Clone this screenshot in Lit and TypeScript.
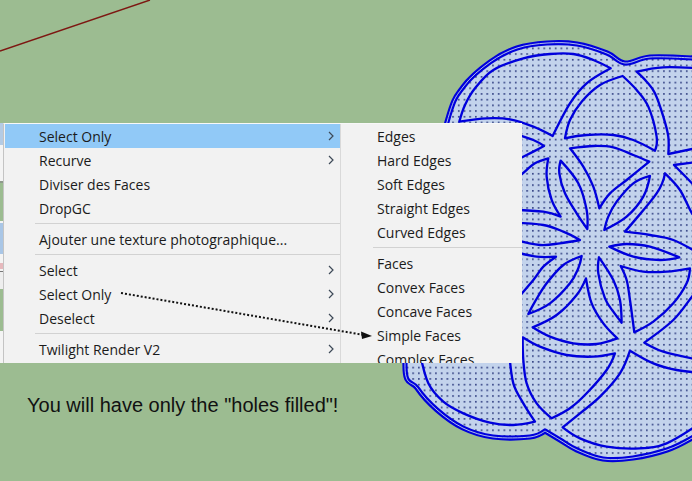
import { css, html, LitElement, svg } from "lit";
import { customElement } from "lit/decorators.js";

type Row = { label?: string; sub?: boolean; active?: boolean; sep?: boolean };
type Pt = [number, number];

const MAIN: Row[] = [
	{ label: "Select Only", sub: true, active: true },
	{ label: "Recurve", sub: true },
	{ label: "Diviser des Faces" },
	{ label: "DropGC" },
	{ sep: true },
	{ label: "Ajouter une texture photographique..." },
	{ sep: true },
	{ label: "Select", sub: true },
	{ label: "Select Only", sub: true },
	{ label: "Deselect", sub: true },
	{ sep: true },
	{ label: "Twilight Render V2", sub: true },
];

const SUB: Row[] = [
	{ label: "Edges" },
	{ label: "Hard Edges" },
	{ label: "Soft Edges" },
	{ label: "Straight Edges" },
	{ label: "Curved Edges" },
	{ sep: true },
	{ label: "Faces" },
	{ label: "Convex Faces" },
	{ label: "Concave Faces" },
	{ label: "Simple Faces" },
	{ label: "Complex Faces" },
];

// strip of the window behind the menu, at the left edge
const STRIP = [
	{ h: 22, c: "#b4cbe4" },
	{ h: 36, c: "#f4f4f4" },
	{ h: 2, c: "#8f9a8c" },
	{ h: 38, c: "#9cbc91" },
	{ h: 2, c: "#f4f4f4" },
	{ h: 31, c: "#a9c6e6" },
	{ h: 9, c: "#f4f4f4" },
	{ h: 6, c: "#e6b9bd" },
	{ h: 2, c: "#f4f4f4" },
	{ h: 1, c: "#777777" },
	{ h: 17, c: "#eeeeee" },
	{ h: 42, c: "#9cbc91" },
	{ h: 32, c: "#f4f4f4" },
];

const OUTLINE =
	"M405 363 417 388 437 410 463 428 493 437 530 437 545 431 560 440 577 450 603 459 633 458 667 450 692 438 720 420 720 100 692 58 650 57 625 63 607 53 577 44 547 43 517 48 490 62 463 87 447 122 420 240Z";

// traced in 3x crop coordinates, upper half of the flower (origin 400,30)
const UPPER = [
	"M178 275 195 225 225 175 280 120 370 85 450 72 520 72 580 90 632 115 560 160 510 220 458 318 400 290 330 268 260 265Z",
	"M668 138 600 165 545 215 510 270 495 325 560 315 640 315 700 330 765 362 770 320 745 230 710 180Z",
	"M900 115 790 112 710 125 740 155 765 190 790 260 805 320 805 372 900 352",
	"M340 310 400 330 432 348 400 365 340 395",
	"M340 450 366 432 405 400 445 385 440 440 455 510 482 560 430 545 340 540",
	"M482 392 478 430 495 490 530 550 562 597 560 540 535 460Z",
	"M510 355 580 348 640 352 700 375 748 395 680 450 630 490 598 535 580 470 550 410Z",
	"M750 438 700 460 650 515 625 560 613 600 680 560 730 500Z",
	"M900 570 876 550 840 480 795 430 770 490 675 605 750 615 820 630 900 672",
	"M900 395 822 405 876 460 900 490",
	"M340 578 430 585 490 605 540 630 480 640 420 645 340 628",
];

// lower half (origin 400,240)
const LOWER = [
	"M628 20 680 12 750 20 838 52 780 60 700 50Z",
	"M340 35 410 50 468 50 430 80 400 120 340 190",
	"M545 48 490 75 440 130 405 185 385 222 450 190 510 130 535 85Z",
	"M558 115 530 165 470 225 398 262 450 290 520 310 590 312 652 295 610 250 575 190Z",
	"M597 52 595 100 615 175 640 215 665 248 660 180 640 120Z",
	"M662 78 730 95 800 95 870 85 860 130 820 190 760 245 703 277 690 180 680 120Z",
	"M900 140 876 170 820 240 733 308 790 335 876 355 900 356",
	"M900 550 800 610 720 625 620 620 540 595 488 562 540 520 600 470 660 400 690 332 760 370 830 390 900 398",
	"M645 340 620 390 560 460 510 505 455 535 410 490 380 430 370 360 368 292 420 320 500 345 580 350Z",
	"M328 340 340 430 370 490 405 545 340 555 270 548 190 520 130 485 85 430 60 340",
];

// rounds the traced polylines, but keeps the petal tips sharp
function smooth(d: string): string {
	const closed = d.endsWith("Z");
	const nums = d.replace(/[MZ]/g, "").trim().split(/\s+/).map(Number);
	const pts: Pt[] = [];
	for (let i = 0; i < nums.length; i += 2) pts.push([nums[i], nums[i + 1]]);
	const n = pts.length;
	const at = (i: number) => (closed ? pts[(i + n) % n] : pts[Math.min(n - 1, Math.max(0, i))]);
	const sharp = (i: number) => {
		if (!closed && (i <= 0 || i >= n - 1)) return true;
		const [a, b, c] = [at(i - 1), at(i), at(i + 1)];
		const t = Math.atan2(b[1] - a[1], b[0] - a[0]) - Math.atan2(c[1] - b[1], c[0] - b[0]);
		return Math.abs(Math.atan2(Math.sin(t), Math.cos(t))) > 0.85;
	};
	let out = `M${pts[0][0]} ${pts[0][1]}`;
	const segs = closed ? n : n - 1;
	for (let i = 0; i < segs; i++) {
		const [p0, p1, p2, p3] = [at(i - 1), at(i), at(i + 1), at(i + 2)];
		const c1 = sharp(i) ? p1 : [p1[0] + (p2[0] - p0[0]) / 6, p1[1] + (p2[1] - p0[1]) / 6];
		const c2 = sharp(i + 1) ? p2 : [p2[0] - (p3[0] - p1[0]) / 6, p2[1] - (p3[1] - p1[1]) / 6];
		out += `C${c1[0]} ${c1[1]} ${c2[0]} ${c2[1]} ${p2[0]} ${p2[1]}`;
	}
	return closed ? out + "Z" : out;
}

@customElement("app-root")
export class AppRoot extends LitElement {
	static override styles = css`
		:host {
			display: block;
			position: relative;
			width: 692px;
			height: 481px;
			overflow: hidden;
			background: #9cbc91;
		}

		.canvas {
			position: absolute;
			inset: 0;
		}

		.caption {
			position: absolute;
			left: 27px;
			top: 393px;
			font: 20px/24px "Liberation Sans", Arial, sans-serif;
			color: #111;
			white-space: nowrap;
		}

		.strip {
			position: absolute;
			left: 0;
			top: 123px;
			width: 3px;
			height: 240px;
			display: flex;
			flex-direction: column;
		}

		.menus {
			position: absolute;
			left: 3px;
			top: 123px;
			width: 519px;
			height: 240px;
			display: flex;
			overflow: hidden;
			background: #f2f2f2;
			border-left: 1px solid #c4c4c4;
			border-top: 1px solid #f8f8f8;
			padding-left: 1px;
			box-sizing: border-box;
			font: 14px "Open Sans", "Noto Sans", sans-serif;
			color: #1b1b1b;
		}

		.main {
			width: 335px;
			flex: none;
			border-right: 1px solid #d9d9d9;
			box-sizing: content-box;
		}

		.side {
			flex: 1;
			background: #f2f2f2;
		}

		.row {
			height: 24px;
			display: flex;
			align-items: center;
			justify-content: space-between;
			padding: 0 6px 0 34px;
			white-space: nowrap;
		}

		.side .row {
			padding-left: 36px;
		}

		.row.active {
			background: #91c9f7;
		}

		.row svg {
			width: 6px;
			height: 10px;
			fill: none;
			stroke: #3e4a58;
			stroke-width: 1.2;
		}

		.sep {
			height: 1px;
			margin: 3px 0 3px 30px;
			background: #d2d2d2;
		}

		.side .sep {
			margin-left: 32px;
		}

		.pointer {
			position: absolute;
			inset: 0;
			pointer-events: none;
		}
	`;

	private renderRows(rows: Row[]) {
		return rows.map((r) =>
			r.sep
				? html`<div class="sep"></div>`
				: html`<div class="row ${r.active ? "active" : ""}">
						<span>${r.label}</span>
						${r.sub
							? html`<svg viewBox="0 0 6 10"><path d="M1 1 5 5 1 9" /></svg>`
							: ""}
					</div>`,
		);
	}

	private renderFlower() {
		const outline = smooth(OUTLINE);
		return svg`
			<defs>
				<pattern id="dots" width="5.7" height="5.7" patternUnits="userSpaceOnUse">
					<rect width="6" height="6" fill="#c3d3ec" />
					<rect x="2" y="2" width="1.5" height="1.5" fill="#16246e" />
				</pattern>
			</defs>
			<line x1="0" y1="51" x2="150" y2="0" stroke="#7d1712" stroke-width="1.4" />
			<path d=${outline} fill="url(#dots)" stroke="#0000dc" stroke-width="5.2" stroke-linejoin="round" />
			<path d=${outline} fill="none" stroke="#c3d3ec" stroke-width="0.9" stroke-linejoin="round" />
			<g transform="translate(400 30) scale(.3333)" fill="none" stroke="#0000dc" stroke-width="7" stroke-linejoin="round">
				${UPPER.map((d) => svg`<path d=${smooth(d)} />`)}
			</g>
			<g transform="translate(400 240) scale(.3333)" fill="none" stroke="#0000dc" stroke-width="7" stroke-linejoin="round">
				${LOWER.map((d) => svg`<path d=${smooth(d)} />`)}
			</g>
		`;
	}

	override render() {
		return html`
			<svg class="canvas" width="692" height="481">${this.renderFlower()}</svg>
			<div class="caption">You will have only the "holes filled"!</div>
			<div class="strip">
				${STRIP.map((s) => html`<div style="height:${s.h}px;background:${s.c}"></div>`)}
			</div>
			<div class="menus">
				<div class="main">${this.renderRows(MAIN)}</div>
				<div class="side">${this.renderRows(SUB)}</div>
			</div>
			<svg class="pointer" width="692" height="481">
				<line x1="121" y1="293" x2="364" y2="335" stroke="#111" stroke-width="2" stroke-dasharray="2 2" />
				<path d="M372 336 361 331.5 362 339Z" fill="#111" />
			</svg>
		`;
	}
}
